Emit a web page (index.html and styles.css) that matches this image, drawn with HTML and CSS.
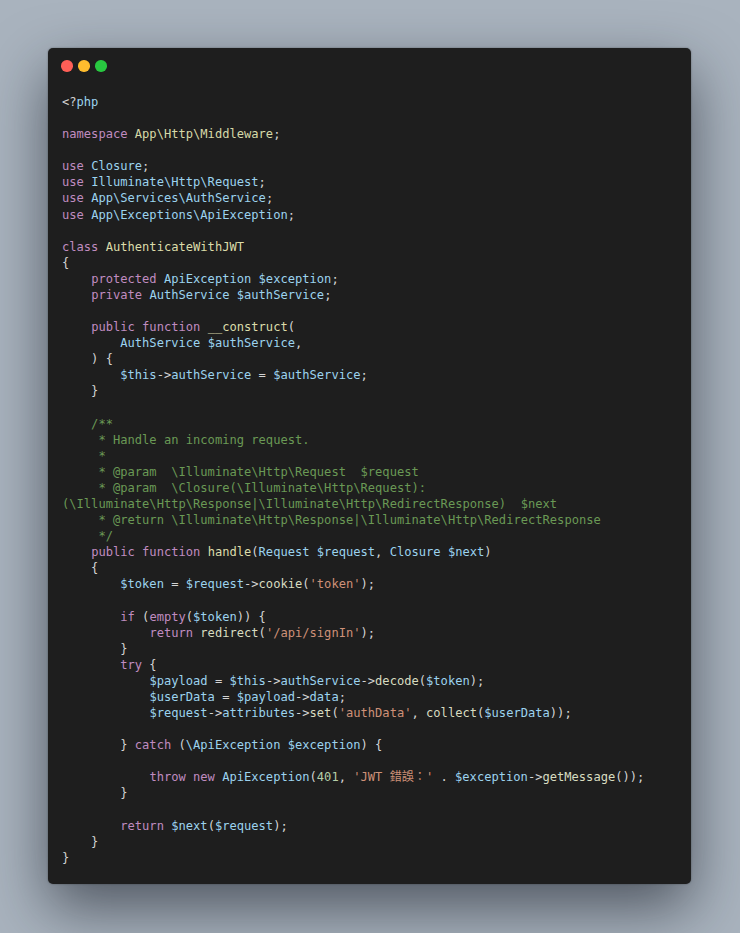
FILE: index.html
```html
<!DOCTYPE html>
<html lang="en">
<head>
<meta charset="utf-8">
<title>AuthenticateWithJWT.php</title>
<link rel="stylesheet" href="styles.css">
</head>
<body>
<div class="window">
  <div class="titlebar">
    <span class="dot red"></span>
    <span class="dot yellow"></span>
    <span class="dot green"></span>
  </div>
<pre class="code"><span class="p">&lt;?</span><span class="v">php</span>

<span class="k">namespace</span> <span class="ns">App\Http\Middleware</span>;

<span class="k">use</span> <span class="t">Closure</span>;
<span class="k">use</span> <span class="t">Illuminate\Http\Request</span>;
<span class="k">use</span> <span class="t">App\Services\AuthService</span>;
<span class="k">use</span> <span class="t">App\Exceptions\ApiException</span>;

<span class="k">class</span> <span class="f">AuthenticateWithJWT</span>
{
    <span class="k">protected</span> <span class="t">ApiException</span> <span class="v">$exception</span>;
    <span class="k">private</span> <span class="t">AuthService</span> <span class="v">$authService</span>;

    <span class="k">public</span> <span class="k">function</span> <span class="f">__construct</span>(
        <span class="t">AuthService</span> <span class="v">$authService</span>,
    ) {
        <span class="v">$this</span>-&gt;<span class="v">authService</span> = <span class="v">$authService</span>;
    }

<span class="c">    /**
     * Handle an incoming request.
     *
     * @param  \Illuminate\Http\Request  $request
     * @param  \Closure(\Illuminate\Http\Request):
(\Illuminate\Http\Response|\Illuminate\Http\RedirectResponse)  $next
     * @return \Illuminate\Http\Response|\Illuminate\Http\RedirectResponse
     */</span>
    <span class="k">public</span> <span class="k">function</span> <span class="f">handle</span>(<span class="t">Request</span> <span class="v">$request</span>, <span class="t">Closure</span> <span class="v">$next</span>)
    {
        <span class="v">$token</span> = <span class="v">$request</span>-&gt;<span class="fc">cookie</span>(<span class="s">'token'</span>);

        <span class="k">if</span> (<span class="k">empty</span>(<span class="v">$token</span>)) {
            <span class="k">return</span> <span class="fc">redirect</span>(<span class="s">'/api/signIn'</span>);
        }
        <span class="k">try</span> {
            <span class="v">$payload</span> = <span class="v">$this</span>-&gt;<span class="v">authService</span>-&gt;<span class="fc">decode</span>(<span class="v">$token</span>);
            <span class="v">$userData</span> = <span class="v">$payload</span>-&gt;<span class="v">data</span>;
            <span class="v">$request</span>-&gt;<span class="v">attributes</span>-&gt;<span class="fc">set</span>(<span class="s">'authData'</span>, <span class="fc">collect</span>(<span class="v">$userData</span>));

        } <span class="k">catch</span> (<span class="t">\ApiException</span> <span class="v">$exception</span>) {

            <span class="k">throw</span> <span class="k">new</span> <span class="t">ApiException</span>(<span class="n">401</span>, <span class="s">'JWT 錯誤：'</span> . <span class="v">$exception</span>-&gt;<span class="fc">getMessage</span>());
        }

        <span class="k">return</span> <span class="v">$next</span>(<span class="v">$request</span>);
    }
}</pre>
</div>
</body>
</html>
```

FILE: styles.css
```css
html, body {
  margin: 0;
  padding: 0;
}

body {
  background: #a9b3be;
  width: 740px;
  height: 933px;
  overflow: hidden;
}

.window {
  margin: 48px 0 0 48px;
  width: 643px;
  height: 836px;
  box-sizing: border-box;
  background: #1e1e1e;
  border-radius: 5px;
  box-shadow: 0 24px 60px rgba(20, 25, 35, 0.6), 0 0 2px rgba(0, 0, 0, 0.4);
  padding: 12px 0 0 0;
}

.titlebar {
  display: flex;
  gap: 5.5px;
  padding-left: 13px;
  height: 12px;
}

.dot {
  width: 11.5px;
  height: 11.5px;
  border-radius: 50%;
  display: block;
}

.red { background: #ff5f57; }
.yellow { background: #febc2e; }
.green { background: #28c840; }

.code {
  margin: 22px 0 0 14px;
  font-family: "DejaVu Sans Mono", "Noto Sans CJK TC", monospace;
  font-size: 12.1px;
  line-height: 16.08px;
  color: #d4d4d4;
  white-space: pre;
}

.p { color: #d4d4d4; }
.k { color: #c08cc0; }
.t { color: #9cd3ee; }
.v { color: #9cd3ee; }
.f { color: #dcdcaa; }
.fc { color: #d8dcc0; }
.ns { color: #d6d9a8; }
.s { color: #ce9178; }
.c { color: #6a9955; }
.n { color: #b5cea8; }
```
